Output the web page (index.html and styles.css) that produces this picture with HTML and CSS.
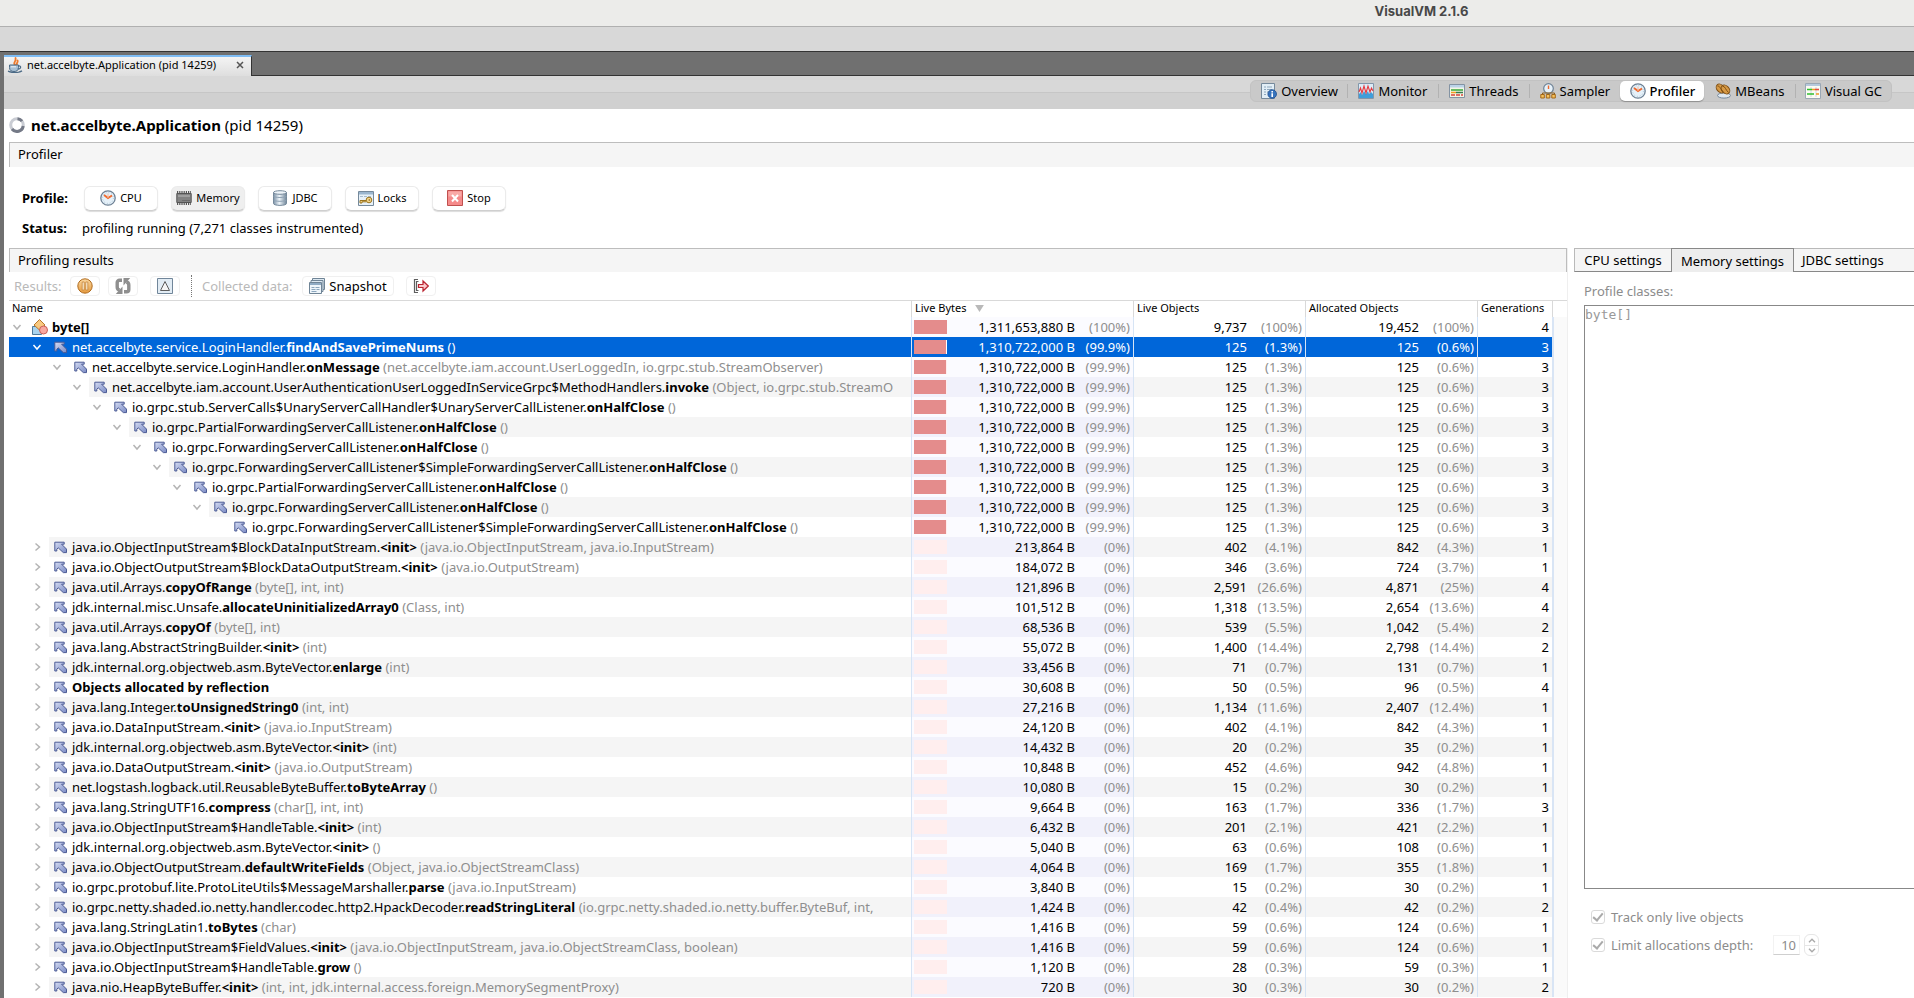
FILE: index.html
```html
<!DOCTYPE html>
<html lang="en">
<head>
<meta charset="utf-8">
<title>VisualVM 2.1.6</title>
<link rel="stylesheet" href="styles.css">
</head>
<body>
<svg class="defs" aria-hidden="true">
  <defs>
    <linearGradient id="g-steel" x1="0" y1="0" x2="1" y2="0"><stop offset="0" stop-color="#7d93a8"/><stop offset=".45" stop-color="#eef5fa"/><stop offset="1" stop-color="#6f8598"/></linearGradient>
    <linearGradient id="g-arrow" x1="0" y1="0" x2="1" y2="1"><stop offset="0" stop-color="#d5dcf3"/><stop offset="1" stop-color="#7a8ac4"/></linearGradient>
    <linearGradient id="g-orange" x1="0" y1="0" x2="0" y2="1"><stop offset="0" stop-color="#fbd9a2"/><stop offset="1" stop-color="#e59a3e"/></linearGradient>
    <symbol id="i-java" viewBox="0 0 16 16"><path d="M8 8C5.500 6 9.500 4.500 8.500 1 M10 8c-1.500-1.500 1.500-2.500.5-4.500" fill="none" stroke="#ee7a2b" stroke-width="1.800" stroke-linecap="round"/><path d="M2.500 8h9v2.500c0 3-2 4-4.500 4s-4.500-1-4.500-4z" fill="#a9c0d3" stroke="#4b6a86"/><path d="M11.500 9c3-.8 3 3-.8 3" fill="none" stroke="#4b6a86" stroke-width="1.200"/><path d="M1 14.200c4 1.800 10 1.800 14-.4" fill="none" stroke="#4b6a86" stroke-width="1.400"/><path d="M4 9.800h5" stroke="#eef5fa"/></symbol>
    <symbol id="i-spinner" viewBox="0 0 16 16"><circle cx="8" cy="8" r="6.300" fill="none" stroke="#c9ccd3" stroke-width="3"/><path d="M8.500 1.700a6.300 6.300 0 0 1 4.500 2.500M14.200 9A6.300 6.300 0 0 1 3 12" fill="none" stroke="#747986" stroke-width="3"/></symbol>
    <symbol id="i-clock" viewBox="0 0 16 16"><circle cx="8" cy="8" r="7.200" fill="#e6f1f9" stroke="#6d8094" stroke-width="1.300"/><circle cx="8" cy="8" r="5.400" fill="none" stroke="#a9c4d8" stroke-dasharray="1 1.800"/><path d="M4 5l4 3 4-2.500" fill="none" stroke="#ef6a2e" stroke-width="2"/><path d="M8 8V3.500" stroke="#f5b79a"/></symbol>
    <symbol id="i-overview" viewBox="0 0 16 16"><path d="M.5.500h13v15H.5z" fill="#e2eef6" stroke="#75899b"/><path d="M3 4h2M6 4h5M3 6.500h2M6 6.500h5M3 9h2M6 9h2M3 11.500h2" stroke="#8fa8bd"/><circle cx="11.200" cy="11" r="4.300" fill="#3673bd" stroke="#1f4f8f" stroke-width=".8"/><path d="M11.200 8v1.500M11.200 10.300V14" stroke="#fff" stroke-width="1.600"/></symbol>
    <symbol id="i-monitor" viewBox="0 0 16 16"><path d="M.5.5h15v15H.5z" fill="#dcebf6" stroke="#8296aa"/><path d="M1 15v-4l2-2 1 3 2-4 2 3 2-3 1 3 2-2 2 2v4z" fill="#3f9edb"/><path d="M1 9l1.500-4L4 10l2-7 2 7 2-7 2 6 1.500-4L15 8" fill="none" stroke="#e8393f" stroke-width="1.100"/></symbol>
    <symbol id="i-threads" viewBox="0 0 16 16"><path d="M.5 1.500h15v13H.5z" fill="#f4f6e6" stroke="#8393a3"/><path d="M1 2h14v2.500H1z" fill="#bcd3e8"/><path d="M2 7h12" stroke="#39a83a" stroke-width="1.500"/><path d="M2 9.500h5" stroke="#f0a020" stroke-width="1.500"/><path d="M7 9.500h7" stroke="#3a7a4e" stroke-width="1.500"/><path d="M2 12h12" stroke="#d7463c" stroke-width="1.300" stroke-dasharray="4 1"/></symbol>
    <symbol id="i-sampler" viewBox="0 0 16 16"><circle cx="8.500" cy="5.500" r="4.800" fill="#e6f1f9" stroke="#6d8094" stroke-width="1.200"/><path d="M8.500 2.500v3.500" stroke="#ef6a2e" stroke-width="1.400"/><path d="M2.500 11.500v-1.500h12v1.500" fill="none" stroke="#8a5d1c"/><path d="M.8 11.500h3.500v3.500H.8zM6.300 11.500h3.500v3.500H6.300zM11.800 11.500h3.500v3.500h-3.500z" fill="#f6c15c" stroke="#a36716"/></symbol>
    <symbol id="i-mbeans" viewBox="0 0 16 16"><ellipse cx="9" cy="12.500" rx="6.500" ry="2.600" fill="#dfe8f0" stroke="#76899c"/><ellipse cx="5.500" cy="5.500" rx="3.600" ry="5" transform="rotate(-42 5.500 5.500)" fill="#d79a45" stroke="#7f4f14"/><ellipse cx="10.500" cy="6.500" rx="3.600" ry="5" transform="rotate(-42 10.500 6.500)" fill="#d79a45" stroke="#7f4f14"/><path d="M2.500 3c3 0 3 4 6 6M7.500 3c3 .5 3 4 6 6.500" fill="none" stroke="#7f4f14"/></symbol>
    <symbol id="i-visualgc" viewBox="0 0 16 16"><path d="M.5.500h15v15H.5z" fill="#fbfbf4" stroke="#9aa7b4"/><path d="M1 1h14v2H1z" fill="#b5c9dc"/><path d="M6 4v10M11 4v10" stroke="#d2d8de"/><path d="M2 6.500h5M2 11h7" stroke="#2fc02f" stroke-width="1.600"/><path d="M7 6.500h3M11 11h3" stroke="#f09b20" stroke-width="1.600"/><path d="M10 6.500h4" stroke="#e24b40" stroke-width="1.600"/></symbol>
    <symbol id="i-memory" viewBox="0 0 16 16"><path d="M1 2.500h14M1 13.500h14" stroke="#555" stroke-width="3" stroke-dasharray="1.200 1"/><path d="M.8 3.500h14.400v9H.8z" fill="#828282" stroke="#555"/><path d="M2 6h12" stroke="#a8a8a8" stroke-width="1.500"/><path d="M6 10.500h8" stroke="#6b6b6b"/></symbol>
    <symbol id="i-jdbc" viewBox="0 0 16 16"><path d="M1.500 2.500v11c0 2.500 13 2.500 13 0v-11z" fill="url(#g-steel)" stroke="#75899b"/><ellipse cx="8" cy="2.500" rx="6.500" ry="1.800" fill="#eef4f9" stroke="#75899b"/><path d="M1.500 6c0 2 13 2 13 0M1.500 9.800c0 2 13 2 13 0" fill="none" stroke="#8fa2b4"/></symbol>
    <symbol id="i-locks" viewBox="0 0 16 16"><path d="M.5 1.500h15v14H.5z" fill="#e8f1f8" stroke="#75899b"/><path d="M1 2h14v2.500H1z" fill="#9bb6cf"/><path d="M2 6.500h12" stroke="#a7bccd" stroke-dasharray="3 1"/><circle cx="11" cy="10" r="2.800" fill="#f6d68b" stroke="#9a741f"/><path d="M8.500 10.500H2v2.500h2v-1.200h4.500" fill="#f6d68b" stroke="#9a741f"/><circle cx="11.300" cy="10" r=".8" fill="#7d5c12"/></symbol>
    <symbol id="i-stop" viewBox="0 0 16 16"><path d="M.5.500h15v15H.5z" fill="#f58a8a" stroke="#c0504e"/><path d="M1.500 1.500h13v5h-13z" fill="#f9a9a6"/><path d="M5 5l6 6.500M11 5l-6 6.500" stroke="#fff" stroke-width="2"/></symbol>
    <symbol id="i-pause" viewBox="0 0 16 16"><circle cx="8" cy="8" r="7.200" fill="url(#g-orange)" stroke="#b06a1c"/><path d="M5.200 4h2v8h-2zM8.800 4h2v8h-2z" fill="#fff4dd" stroke="#bd7a2c" stroke-width=".7"/></symbol>
    <symbol id="i-refresh" viewBox="0 0 16 16"><path d="M7 2.200H4.500A2.300 2.300 0 0 0 2.200 4.500V9a3 3 0 0 0 2.500 3M9 13.800h2.500a2.300 2.300 0 0 0 2.300-2.300V7a3 3 0 0 0-2.500-3" fill="none" stroke="#8f8f8f" stroke-width="3.400"/><path d="M7.500 8.500V16H.8zM8.500 7.500V0h6.700z" fill="#8f8f8f"/></symbol>
    <symbol id="i-delta" viewBox="0 0 16 16"><path d="M.5.500h15v15H.5z" fill="#e2ecf4" stroke="#71869a"/><path d="M8 3.500L12.500 12.500h-9z" fill="#f4f4f4" stroke="#5d5d5d"/></symbol>
    <symbol id="i-snapshot" viewBox="0 0 16 16"><path d="M3.500.5h12v11h-12z" fill="#dce8f1" stroke="#6f8496"/><path d="M2 2.500h12v11H2z" fill="#dce8f1" stroke="#6f8496"/><path d="M.5 4.500h12v11H.5z" fill="#eef5fa" stroke="#6f8496"/><path d="M1 5h11v2H1z" fill="#8fabc4"/><path d="M2.500 9.500h3M6.500 9.500h4M2.500 11.500h4M7.500 11.500h3M2.500 13.500h5" stroke="#8aa5bd"/></symbol>
    <symbol id="i-exit" viewBox="0 0 16 16"><path d="M5 1.500H1.500v13H5M5.500 3.500h-2v9h2" fill="none" stroke="#5e5e5e" stroke-width="1.200"/><path d="M5.500 6.500h4.500V3l5.300 5-5.300 5V9.500H5.500z" fill="#fac9cc" stroke="#ba2430" stroke-width="1.200"/></symbol>
    <symbol id="i-class" viewBox="0 0 16 16"><path d="M.5 7.500h9v8h-9z" fill="#a8d3ee" stroke="#4f7a9c"/><path d="M7.500.5l5.500 5.500-5.500 5L2 6z" fill="#f9c980" stroke="#b9782b"/><circle cx="11.500" cy="11" r="4" fill="#f8a8a0" stroke="#ca5f58"/></symbol>
    <symbol id="i-node" viewBox="0 0 13 13"><path d="M.8 10V1.200h9.400v2H7.600l4.900 4.900v3.500H9.300L4.200 6.800 2.800 8.200V10z" fill="url(#g-arrow)" stroke="#4b5a94" stroke-linejoin="round"/></symbol>
    <symbol id="i-open" viewBox="0 0 10 10"><path d="M1.500 3L5 7l3.500-4" fill="none" stroke="currentColor" stroke-width="1.500"/></symbol>
    <symbol id="i-shut" viewBox="0 0 10 10"><path d="M3.500 1.500L7.500 5l-4 3.500" fill="none" stroke="currentColor" stroke-width="1.500"/></symbol>
    <symbol id="i-up" viewBox="0 0 8 5"><path d="M1 4.200l3-3 3 3" fill="none" stroke="currentColor" stroke-width="1.400"/></symbol>
    <symbol id="i-down" viewBox="0 0 8 5"><path d="M1 .8l3 3 3-3" fill="none" stroke="currentColor" stroke-width="1.400"/></symbol>
    <symbol id="i-sort" viewBox="0 0 10 8"><path d="M0 0h10L5 8z" fill="#b9b9b9"/></symbol>
    <symbol id="i-close" viewBox="0 0 8 8"><path d="M1 1l6 6M7 1L1 7" stroke="#555" stroke-width="1.500"/></symbol>
  </defs>
</svg>

<header class="titlebar">VisualVM 2.1.6</header>
<div class="toolstrip"></div>
<div class="window">
  <nav class="doctabs">
    <div class="doctab">
      <svg class="ico"><use href="#i-java"/></svg>
      <span>net.accelbyte.Application (pid 14259)</span>
      <button class="doctab-close" aria-label="Close"><svg class="ico-close"><use href="#i-close"/></svg></button>
    </div>
  </nav>
  <nav class="views">
    <div class="segments">
      <button class="segment"><svg class="ico"><use href="#i-overview"/></svg>Overview</button>
      <button class="segment ruled"><svg class="ico"><use href="#i-monitor"/></svg>Monitor</button>
      <button class="segment ruled"><svg class="ico"><use href="#i-threads"/></svg>Threads</button>
      <button class="segment ruled"><svg class="ico"><use href="#i-sampler"/></svg>Sampler</button>
      <button class="segment active"><svg class="ico"><use href="#i-clock"/></svg>Profiler</button>
      <button class="segment"><svg class="ico"><use href="#i-mbeans"/></svg>MBeans</button>
      <button class="segment ruled"><svg class="ico"><use href="#i-visualgc"/></svg>Visual GC</button>
    </div>
  </nav>
  <main class="page">
    <h1 class="heading"><svg class="ico"><use href="#i-spinner"/></svg><span><b>net.accelbyte.Application</b> (pid 14259)</span></h1>
    <h2 class="section">Profiler</h2>
    <div class="controls">
      <div class="control-row">
        <span class="caption">Profile:</span>
        <button class="push"><svg class="ico"><use href="#i-clock"/></svg>CPU</button>
        <button class="push pressed"><svg class="ico"><use href="#i-memory"/></svg>Memory</button>
        <button class="push"><svg class="ico"><use href="#i-jdbc"/></svg>JDBC</button>
        <button class="push"><svg class="ico"><use href="#i-locks"/></svg>Locks</button>
        <button class="push"><svg class="ico"><use href="#i-stop"/></svg>Stop</button>
      </div>
      <div class="status-row"><span class="caption status-caption">Status:</span><span>profiling running (7,271 classes instrumented)</span></div>
    </div>
    <div class="panes">
      <section class="results">
        <h2 class="section closed">Profiling results</h2>
        <div class="results-bar">
          <span class="results-label">Results:</span>
          <button class="tool" aria-label="Pause"><svg class="ico"><use href="#i-pause"/></svg></button>
          <button class="tool" aria-label="Refresh"><svg class="ico"><use href="#i-refresh"/></svg></button>
          <button class="tool spaced" aria-label="Delta"><svg class="ico"><use href="#i-delta"/></svg></button>
          <span class="divider"></span>
          <span class="data-label">Collected data:</span>
          <button class="tool wide"><svg class="ico"><use href="#i-snapshot"/></svg>Snapshot</button>
          <button class="tool spaced" aria-label="Exit"><svg class="ico"><use href="#i-exit"/></svg></button>
        </div>
        <table class="tree">
          <colgroup><col><col class="c-bytes"><col class="c-objects"><col class="c-objects"><col class="c-gen"><col class="c-gutter"></colgroup>
          <thead><tr>
            <th>Name</th>
            <th class="tick">Live Bytes <svg class="ico-sort"><use href="#i-sort"/></svg></th>
            <th class="tick">Live Objects</th>
            <th class="tick">Allocated Objects</th>
            <th class="tick">Generations</th>
            <th class="tick"></th>
          </tr></thead>
          <tbody id="rows"></tbody>
        </table>
      </section>
      <aside class="settings">
        <div class="settings-tabs">
          <button class="settings-tab">CPU settings</button>
          <button class="settings-tab current">Memory settings</button>
          <button class="settings-tab last">JDBC settings</button>
        </div>
        <div class="settings-body">
          <label class="classes-label" for="classes">Profile classes:</label>
          <textarea class="classes" id="classes" disabled>byte[]</textarea>
          <div class="options">
            <label class="option"><input class="check" type="checkbox" checked disabled>Track only live objects</label>
            <div class="option-row">
              <label class="option"><input class="check" type="checkbox" checked disabled>Limit allocations depth:</label>
              <input class="depth" type="text" value="10" aria-label="Allocations depth" disabled>
              <div class="stepper">
                <button class="step" aria-label="Increase" disabled><svg class="ico-step"><use href="#i-up"/></svg></button>
                <button class="step" aria-label="Decrease" disabled><svg class="ico-step"><use href="#i-down"/></svg></button>
              </div>
            </div>
          </div>
        </div>
      </aside>
    </div>
  </main>
</div>
<script src="rows.js"></script>
</body>
</html>
```
FILE: styles.css
```css
* { box-sizing: border-box; }

body {
  margin: 0;
  height: 100vh;
  overflow: hidden;
  display: flex;
  flex-direction: column;
  background: #fff;
  color: #000;
  font: 13px/20px "Noto Sans", "Open Sans", sans-serif;
}

button, input, textarea { margin: 0; padding: 0; font: inherit; color: inherit; }
button { display: flex; align-items: center; justify-content: center; border: 0; background: none; white-space: nowrap; }

.defs { position: absolute; width: 0; height: 0; }
.ico { width: 16px; height: 16px; flex: none; }
.ico-close { width: 8px; height: 8px; }
.ico-sort { width: 9px; height: 7px; margin-left: 6px; }
.ico-step { width: 8px; height: 5px; }

/* Window chrome */
.titlebar {
  flex: none;
  height: 27px;
  padding-left: 929px;
  border-bottom: 1px solid #b0b0b0;
  background: #ececea;
  color: #484848;
  font: 700 13px/23px Inter, sans-serif;
  text-align: center;
}
.toolstrip { flex: none; height: 25px; background: #d8d8d8; border-bottom: 1px solid #333; }
.window {
  flex: 1;
  min-height: 0;
  display: flex;
  flex-direction: column;
  border-left: 4px solid #707070;
}
.doctabs {
  flex: none;
  display: flex;
  align-items: flex-end;
  height: 24px;
  background: #707070;
  border-bottom: 1px solid #333;
}
.doctab {
  display: flex;
  align-items: center;
  height: 21px;
  margin-bottom: -1px;
  padding: 0 6px 3px 3px;
  gap: 4px;
  border-top: 2px solid #7fbdf5;
  border-right: 1px solid #333;
  background: linear-gradient(#f4f4f4, #dedede);
  font-size: 11px;
  line-height: 16px;
}
.doctab-close { width: 11px; margin-left: 14px; }
.views {
  flex: none;
  display: flex;
  justify-content: flex-end;
  align-items: flex-start;
  height: 33px;
  padding: 4px 22px 0 0;
  background: linear-gradient(#d8d8d8 16px, #c6c6c6 16px, #c6c6c6 17px, #d0d0d0 17px);
}
.segments {
  display: flex;
  height: 22px;
  border: 1px solid #c2c2c2;
  border-radius: 6px;
  background: #c9c9c9;
}
.segment { min-width: 91px; height: 20px; padding: 0 9px 1px; gap: 4px; border-left: 1px solid transparent; }
.segment.ruled { border-image: linear-gradient(transparent 20%, #b2b2b2 20%, #b2b2b2 80%, transparent 80%) 1; border-width: 0 0 0 1px; border-style: solid; }
.segment.active {
  min-width: 84px;
  padding: 0 5px 1px;
  border-radius: 5px;
  background: #fff;
  font-weight: 500;
  box-shadow: 0 1px 1px #8e8e8e;
}

/* Page header and profiling controls */
.page { flex: 1; min-height: 0; display: flex; flex-direction: column; padding-left: 5px; }
.heading {
  display: flex;
  align-items: center;
  flex: none;
  gap: 6px;
  height: 33px;
  margin: 0;
  padding-bottom: 2px;
  font-size: 15px;
  font-weight: 400;
}
.section {
  flex: none;
  height: 25px;
  margin: 0;
  padding-left: 8px;
  border: 1px solid #bdbdbd;
  border-width: 1px 0 0 1px;
  background: #f5f5f5;
  font-size: 13px;
  line-height: 23px;
  font-weight: 400;
}
.section.closed { height: 24px; border-right-width: 1px; }
.controls { flex: none; padding: 18px 0 11px 13px; }
.control-row { display: flex; align-items: center; gap: 13px; height: 26px; }
.status-row { display: flex; align-items: center; height: 26px; padding-top: 8px; }
.caption { width: 49px; font-weight: 700; }
.status-caption { width: 60px; }
.push {
  width: 74px;
  height: 25px;
  gap: 4px;
  border: 1px solid #ebebeb;
  border-bottom-color: #cfcfcf;
  border-radius: 6px;
  background: #fff;
  box-shadow: 0 1px 1px #dcdcdc;
  font-size: 11px;
}
.pressed { background: #efefef; }

.panes { flex: 1; min-height: 0; display: flex; gap: 6px; }
.results { flex: 1; min-width: 0; overflow: hidden; border-right: 1px solid #efefef; }
.results-bar { display: flex; align-items: center; height: 28px; padding: 0 5px; color: #b9b9b9; }
.results-label { width: 56px; }
.tool { width: 30px; height: 20px; border: 1px solid #f0f0f0; border-radius: 4px; color: #000; }
.tool + .tool { margin-left: 8px; }
.tool + .tool.spaced { margin-left: 12px; }
.tool.wide { width: 92px; gap: 4px; }
.divider { height: 22px; margin: 0 10px 0 11px; border-left: 1px dotted #777; }
.data-label { width: 100px; }

/* Allocation tree */
.tree { width: 100%; table-layout: fixed; border-collapse: separate; border-spacing: 0; border-top: 1px solid #d9d9d9; }
.c-bytes { width: 222px; }
.c-objects { width: 172px; }
.c-gen { width: 75px; }
.c-gutter { width: 15px; }
.tree th { height: 16px; padding: 0 3px 2px; font-size: 11px; line-height: 14px; font-weight: 400; text-align: left; white-space: nowrap; }
.tree th.tick { border-left: 1px solid #d9d9d9; }
.tree td { height: 20px; padding: 0; white-space: nowrap; overflow: hidden; }
.tree td + td { border-left: 1px solid #d6e4f5; }
.node { display: flex; }
.indent { flex: none; display: flex; align-items: center; justify-content: flex-end; padding-right: 7px; color: #b4b4b4; }
.twisty { width: 10px; height: 10px; }
.label { flex: 1; min-width: 0; overflow: hidden; display: flex; align-items: center; gap: 5px; padding-left: 5px; }
.label .ico-node { flex: none; width: 13px; height: 13px; }
.label .ico-class { flex: none; width: 16px; height: 16px; }
.label.root { gap: 4px; padding-left: 3px; }
.dim, .pct { color: #8e8e8e; }
.odd .label, .odd td.num { background: #f5f5f5; }
td.num { text-align: right; }
.tree td.num { padding-right: 3px; }
td.bytes .amounts { display: flex; align-items: center; }
td.bytes { background: #fbfbff; }
.odd td.bytes { background: #f1f1fb; }
.bar { width: 33px; height: 14px; margin: 0 auto 0 2px; background: #ffeeee; }
.fill { height: 14px; background: #e48c8c; }
.pct { display: inline-block; width: 55px; }
.tree td.gutter { border-left: 2px solid #d9e5f5; background: #fafafa; }
.selected td.name, .selected .label, .selected td.num, .selected td.bytes { background: #0066d9; color: #fff; }
.selected .dim, .selected .pct { color: #fff; }
.selected .indent { color: #fff; }
.selected .bar { background: #fff; }

/* Settings */
.settings { flex: none; width: 340px; display: flex; flex-direction: column; color: #8c8c8c; }
.settings-tabs { display: flex; height: 24px; color: #000; }
.settings-tab { width: 97px; height: 24px; border: 1px solid #b9b9b9; border-width: 1px 0 1px 1px; border-bottom-color: #888; background: #f5f5f5; }
.settings-tab.current { width: 123px; border-color: #888; border-width: 1px 1px 0; background: #ededed; }
.settings-tab.last { flex: 1; justify-content: flex-start; padding-left: 8px; border-left-width: 0; }
.settings-body { flex: 1; min-height: 0; display: flex; flex-direction: column; padding: 9px 0 0 10px; }
.classes-label { height: 24px; }
.classes {
  flex: 1;
  resize: none;
  border: 1px solid #888;
  border-right-width: 0;
  border-radius: 0;
  background: #fff;
  color: #999;
  font: 13px/18px "DejaVu Sans Mono", monospace;
}
.options { height: 109px; padding: 18px 0 0 7px; }
.option { display: flex; align-items: center; gap: 6px; height: 20px; }
.option-row { display: flex; align-items: center; height: 36px; }
.check {
  appearance: none;
  display: flex;
  align-items: center;
  justify-content: center;
  width: 14px;
  height: 14px;
  border: 1px solid #dadada;
  border-radius: 3px;
  background: #fff;
}
.check::before {
  content: "";
  width: 4px;
  height: 8px;
  margin-bottom: 2px;
  border: solid #aaa;
  border-width: 0 2px 2px 0;
  rotate: 40deg;
}
.depth {
  width: 27px;
  height: 20px;
  margin-left: auto;
  padding-right: 3px;
  border: 1px solid #f2f2f2;
  border-bottom-color: #cfcfcf;
  background: #fff;
  text-align: right;
}
.stepper { width: 15px; height: 22px; margin: 0 95px 0 4px; border: 1px solid #e6e6e6; border-radius: 6px; }
.step { width: 13px; height: 10px; color: #aaa; }
.step + .step { border-top: 1px solid #e6e6e6; }
```
FILE: rows.js
```javascript
// depth | state | package and class | method | parameters | bytes | % | live | % | allocated | % | generations
const DATA = `0|open||byte[]||1,311,653,880|100|9,737|100|19,452|100|4
1|open|net.accelbyte.service.LoginHandler.|findAndSavePrimeNums|()|1,310,722,000|99.9|125|1.3|125|0.6|3
2|open|net.accelbyte.service.LoginHandler.|onMessage|(net.accelbyte.iam.account.UserLoggedIn, io.grpc.stub.StreamObserver)|1,310,722,000|99.9|125|1.3|125|0.6|3
3|open|net.accelbyte.iam.account.UserAuthenticationUserLoggedInServiceGrpc$MethodHandlers.|invoke|(Object, io.grpc.stub.StreamO|1,310,722,000|99.9|125|1.3|125|0.6|3
4|open|io.grpc.stub.ServerCalls$UnaryServerCallHandler$UnaryServerCallListener.|onHalfClose|()|1,310,722,000|99.9|125|1.3|125|0.6|3
5|open|io.grpc.PartialForwardingServerCallListener.|onHalfClose|()|1,310,722,000|99.9|125|1.3|125|0.6|3
6|open|io.grpc.ForwardingServerCallListener.|onHalfClose|()|1,310,722,000|99.9|125|1.3|125|0.6|3
7|open|io.grpc.ForwardingServerCallListener$SimpleForwardingServerCallListener.|onHalfClose|()|1,310,722,000|99.9|125|1.3|125|0.6|3
8|open|io.grpc.PartialForwardingServerCallListener.|onHalfClose|()|1,310,722,000|99.9|125|1.3|125|0.6|3
9|open|io.grpc.ForwardingServerCallListener.|onHalfClose|()|1,310,722,000|99.9|125|1.3|125|0.6|3
10|leaf|io.grpc.ForwardingServerCallListener$SimpleForwardingServerCallListener.|onHalfClose|()|1,310,722,000|99.9|125|1.3|125|0.6|3
1|shut|java.io.ObjectInputStream$BlockDataInputStream.|<init>|(java.io.ObjectInputStream, java.io.InputStream)|213,864|0|402|4.1|842|4.3|1
1|shut|java.io.ObjectOutputStream$BlockDataOutputStream.|<init>|(java.io.OutputStream)|184,072|0|346|3.6|724|3.7|1
1|shut|java.util.Arrays.|copyOfRange|(byte[], int, int)|121,896|0|2,591|26.6|4,871|25|4
1|shut|jdk.internal.misc.Unsafe.|allocateUninitializedArray0|(Class, int)|101,512|0|1,318|13.5|2,654|13.6|4
1|shut|java.util.Arrays.|copyOf|(byte[], int)|68,536|0|539|5.5|1,042|5.4|2
1|shut|java.lang.AbstractStringBuilder.|<init>|(int)|55,072|0|1,400|14.4|2,798|14.4|2
1|shut|jdk.internal.org.objectweb.asm.ByteVector.|enlarge|(int)|33,456|0|71|0.7|131|0.7|1
1|shut||Objects allocated by reflection||30,608|0|50|0.5|96|0.5|4
1|shut|java.lang.Integer.|toUnsignedString0|(int, int)|27,216|0|1,134|11.6|2,407|12.4|1
1|shut|java.io.DataInputStream.|<init>|(java.io.InputStream)|24,120|0|402|4.1|842|4.3|1
1|shut|jdk.internal.org.objectweb.asm.ByteVector.|<init>|(int)|14,432|0|20|0.2|35|0.2|1
1|shut|java.io.DataOutputStream.|<init>|(java.io.OutputStream)|10,848|0|452|4.6|942|4.8|1
1|shut|net.logstash.logback.util.ReusableByteBuffer.|toByteArray|()|10,080|0|15|0.2|30|0.2|1
1|shut|java.lang.StringUTF16.|compress|(char[], int, int)|9,664|0|163|1.7|336|1.7|3
1|shut|java.io.ObjectInputStream$HandleTable.|<init>|(int)|6,432|0|201|2.1|421|2.2|1
1|shut|jdk.internal.org.objectweb.asm.ByteVector.|<init>|()|5,040|0|63|0.6|108|0.6|1
1|shut|java.io.ObjectOutputStream.|defaultWriteFields|(Object, java.io.ObjectStreamClass)|4,064|0|169|1.7|355|1.8|1
1|shut|io.grpc.protobuf.lite.ProtoLiteUtils$MessageMarshaller.|parse|(java.io.InputStream)|3,840|0|15|0.2|30|0.2|1
1|shut|io.grpc.netty.shaded.io.netty.handler.codec.http2.HpackDecoder.|readStringLiteral|(io.grpc.netty.shaded.io.netty.buffer.ByteBuf, int,|1,424|0|42|0.4|42|0.2|2
1|shut|java.lang.StringLatin1.|toBytes|(char)|1,416|0|59|0.6|124|0.6|1
1|shut|java.io.ObjectInputStream$FieldValues.|<init>|(java.io.ObjectInputStream, java.io.ObjectStreamClass, boolean)|1,416|0|59|0.6|124|0.6|1
1|shut|java.io.ObjectInputStream$HandleTable.|grow|()|1,120|0|28|0.3|59|0.3|1
1|shut|java.nio.HeapByteBuffer.|<init>|(int, int, jdk.internal.access.foreign.MemorySegmentProxy)|720|0|30|0.3|30|0.2|2`;

const SELECTED = 1;
const BAR_WIDTH = 33;
const esc = s => s.replace(/</g, '&lt;').replace(/>/g, '&gt;');

document.getElementById('rows').innerHTML = DATA.split('\n').map((line, i) => {
  const [depth, state, owner, method, params, bytes, bytesPct, live, livePct, alloc, allocPct, gen] = line.split('|');
  const twisty = state === 'leaf' ? '' : `<svg class="twisty"><use href="#i-${state}"/></svg>`;
  const icon = depth === '0' ? '<svg class="ico-class"><use href="#i-class"/></svg>' : '<svg class="ico-node"><use href="#i-node"/></svg>';
  const fill = Math.floor(BAR_WIDTH * bytesPct / 100);
  return `<tr class="${i === SELECTED ? 'selected' : i % 2 ? 'odd' : 'even'}">
    <td class="name"><div class="node"><span class="indent" style="width:${20 + 20 * depth}px">${twisty}</span><span class="label${depth === '0' ? ' root' : ''}">${icon}<span>${esc(owner)}<b>${esc(method)}</b> <span class="dim">${params}</span></span></span></div></td>
    <td class="num bytes"><div class="amounts"><div class="bar"><div class="fill" style="width:${fill}px"></div></div>${bytes} B<span class="pct">(${bytesPct}%)</span></div></td>
    <td class="num">${live}<span class="pct">(${livePct}%)</span></td>
    <td class="num">${alloc}<span class="pct">(${allocPct}%)</span></td>
    <td class="num">${gen}</td>
    <td class="gutter"></td></tr>`;
}).join('');
```
